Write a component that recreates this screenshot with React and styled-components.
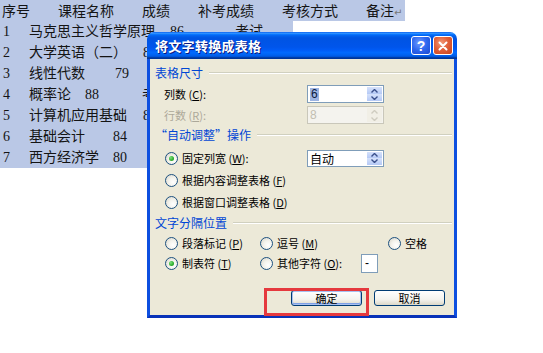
import React from 'react';
import styled, { createGlobalStyle } from 'styled-components';

const Global = createGlobalStyle`
  html, body { margin: 0; padding: 0; background: #fff; }
  body { width: 543px; height: 353px; overflow: hidden; }
  #root { width: 543px; height: 353px; }
`;

const Page = styled.div`
  position: relative;
  width: 543px;
  height: 353px;
  background: #fff;
  overflow: hidden;
`;

/* ---------- document behind the dialog ---------- */
const Doc = styled.div`
  display: flex;
  flex-direction: column;
  align-items: flex-start;
  font-family: "Liberation Serif", "Noto Sans CJK SC", serif;
  font-size: 14px;
  color: #141414;
`;

const DocRow = styled.div`
  display: flex;
  align-items: center;
  box-sizing: border-box;
  height: 21px;
  width: ${p => p.$w}px;
  padding-top: ${p => p.$pt || 0}px;
  background: #bac8e6;
  white-space: nowrap;
  line-height: 18px;
`;

const Cell = styled.span`
  flex: none;
  width: ${p => (p.$w ? `${p.$w}px` : 'auto')};
  padding-left: ${p => p.$pl || 0}px;
  box-sizing: border-box;
`;

const Mark = styled.span`
  font-size: 10px;
  color: #777;
  font-family: "DejaVu Sans", sans-serif;
`;

/* ---------- dialog ---------- */
const Dialog = styled.div`
  position: absolute;
  left: 147px;
  top: 32px;
  width: 310px;
  height: 286px;
  display: flex;
  flex-direction: column;
  font-family: "Noto Sans CJK SC", sans-serif;
`;

const TitleBar = styled.div`
  flex: none;
  height: 27px;
  display: flex;
  align-items: center;
  gap: 2px;
  padding: 0 4px 0 8px;
  border-radius: 7px 7px 0 0;
  background: linear-gradient(to bottom, #0058ee 0%, #3593ff 4%, #288eff 6%, #127dff 8%, #036ffc 10%, #0262ee 14%, #0057e5 20%, #0054e3 24%, #0055eb 56%, #005bf5 66%, #026afe 76%, #0062ef 86%, #0052d6 92%, #0040ab 94%, #003092 100%);
`;

const Title = styled.div`
  flex: 1;
  color: #fff;
  font-weight: bold;
  font-size: 13px;
  line-height: 16px;
  letter-spacing: 0.3px;
  text-shadow: 1px 1px 0 #0a1a80;
`;

const TitleButton = styled.div`
  width: 20px;
  height: 19px;
  box-sizing: border-box;
  border: 1px solid #fff;
  border-radius: 3px;
  display: flex;
  align-items: center;
  justify-content: center;
  color: #fff;
  font-family: "Liberation Sans", sans-serif;
  font-weight: bold;
  font-size: 14px;
  background: ${p => p.$close
    ? 'radial-gradient(circle at 40% 35%, #f29a79 0%, #e1603a 45%, #c8431c 100%)'
    : 'radial-gradient(circle at 40% 35%, #6e9bff 0%, #2d66ee 50%, #1a48d0 100%)'};
`;

const Body = styled.div`
  flex: 1;
  display: flex;
  flex-direction: column;
  background: #ece9d8;
  border: 3px solid #0d4fe0;
  border-top: 0;
  border-bottom-color: #0832b8;
  padding-top: 6px;
  font-size: 11px;
  color: #000;
`;

const GroupHeader = styled.div`
  display: flex;
  align-items: center;
  height: 16px;
  margin-top: ${p => p.$mt || 0}px;
  padding: 0 2px 0 5px;
`;

const GroupLabel = styled.span`
  color: #0046d5;
  font-size: 12px;
  line-height: 16px;
`;

const GroupLine = styled.span`
  flex: 1;
  height: 0;
  margin-left: 6px;
  border-top: 1px solid #d0d0bf;
  border-bottom: 1px solid #fff;
`;

const FieldRow = styled.div`
  display: flex;
  align-items: center;
  height: 20px;
  margin-top: ${p => p.$mt || 0}px;
  padding-left: 14px;
`;

const FieldLabel = styled.span`
  width: 143px;
  flex: none;
  color: ${p => (p.$disabled ? '#aca899' : '#000')};
  line-height: 14px;
`;

const SpinBox = styled.div`
  width: 77px;
  height: ${p => p.$h || 18}px;
  box-sizing: border-box;
  display: flex;
  border: 1px solid ${p => (p.$disabled ? '#c9c7ba' : '#7f9db9')};
  background: ${p => (p.$disabled ? '#f4f3ee' : '#fff')};
`;

const SpinValue = styled.div`
  flex: 1;
  display: flex;
  align-items: center;
  padding-left: 2px;
  font-family: "Liberation Sans", "Noto Sans CJK SC", sans-serif;
  font-size: 12px;
  color: ${p => (p.$disabled ? '#c2beb1' : '#000')};
`;

const Selected = styled.span`
  background: #9db4e3;
  color: #0b1a40;
  padding: 0 1px;
  line-height: 13px;
`;

const SpinButtons = styled.div`
  width: 15px;
  flex: none;
  display: flex;
  flex-direction: column;
  padding: 1px;
  gap: 0;
`;

const SpinHalf = styled.div`
  flex: 1;
  display: flex;
  align-items: center;
  justify-content: center;
  background: ${p => (p.$disabled ? '#f1efe6' : 'linear-gradient(to bottom, #d6e2fb, #b5c9f5)')};
`;

const RadioRow = styled.div`
  display: flex;
  align-items: center;
  height: ${p => p.$h || 22}px;
  margin-top: ${p => p.$mt || 0}px;
  padding-left: 15px;
`;

const RadioItem = styled.div`
  display: flex;
  align-items: center;
  gap: 4px;
  flex: none;
  width: ${p => (p.$w ? `${p.$w}px` : 'auto')};
  line-height: 14px;
  white-space: nowrap;
`;

const RadioCircle = styled.span`
  width: 13px;
  height: 13px;
  box-sizing: border-box;
  flex: none;
  border-radius: 50%;
  border: 1px solid #1c5180;
  background: radial-gradient(circle at 65% 65%, #ffffff 0%, #f3f2ec 45%, #d5d2c5 100%);
  display: flex;
  align-items: center;
  justify-content: center;
  &::after {
    content: '';
    display: ${p => (p.$checked ? 'block' : 'none')};
    width: 5px;
    height: 5px;
    border-radius: 50%;
    background: radial-gradient(circle at 35% 35%, #7fe07f 0%, #31b131 55%, #1a8c1a 100%);
  }
`;

const CharBox = styled.div`
  width: 17px;
  height: 19px;
  box-sizing: border-box;
  border: 1px solid #7f9db9;
  background: #fff;
  display: flex;
  align-items: center;
  padding-left: 3px;
  font-family: "Liberation Sans", sans-serif;
  font-size: 12px;
`;

const ButtonRow = styled.div`
  display: flex;
  justify-content: flex-end;
  gap: 12px;
  margin-top: 17px;
  padding-right: 9px;
`;

const Button = styled.div`
  width: 71px;
  height: 16px;
  box-sizing: border-box;
  border: 1px solid #003c74;
  border-radius: 3px;
  display: flex;
  align-items: center;
  justify-content: center;
  font-size: 11px;
  line-height: 14px;
  background: linear-gradient(to bottom, #ffffff 0%, #f4f3ee 60%, #dcd8c8 100%);
  box-shadow: ${p => (p.$default ? 'inset 0 0 0 1px #a8c0f0, inset 0 -1px 0 1px #7ea0e6' : 'none')};
`;

const Highlight = styled.div`
  position: absolute;
  left: 264px;
  top: 288px;
  width: 105px;
  height: 28px;
  box-sizing: border-box;
  border: 3px solid #e5393e;
  pointer-events: none;
`;

const Arrow = ({ up, color = '#3a4f8a' }) => (
  <svg width="7" height="4" viewBox="0 0 7 4">
    <path d={up ? 'M0.5 3.5 L3.5 0.5 L6.5 3.5' : 'M0.5 0.5 L3.5 3.5 L6.5 0.5'} fill="none" stroke={color} strokeWidth="1.4" />
  </svg>
);

const Spinner = ({ disabled }) => (
  <SpinButtons>
    <SpinHalf $disabled={disabled}><Arrow up color={disabled ? '#cfccc0' : '#3a4f8a'} /></SpinHalf>
    <SpinHalf $disabled={disabled}><Arrow color={disabled ? '#cfccc0' : '#3a4f8a'} /></SpinHalf>
  </SpinButtons>
);

const Radio = ({ checked, w, children }) => (
  <RadioItem $w={w}>
    <RadioCircle $checked={checked} />
    <span>{children}</span>
  </RadioItem>
);

const rows = [
  { n: '1', name: '马克思主义哲学原理', nw: 141, score: '86', sw: 65, rest: '考试', w: 293 },
  { n: '2', name: '大学英语（二）', nw: 114, score: '85', w: 300 },
  { n: '3', name: '线性代数', nw: 86, score: '79', w: 300 },
  { n: '4', name: '概率论', nw: 56, score: '88', sw: 57, rest: '考试', w: 300 },
  { n: '5', name: '计算机应用基础', nw: 114, score: '83', w: 300 },
  { n: '6', name: '基础会计', nw: 84, score: '84', w: 300 },
  { n: '7', name: '西方经济学', nw: 84, score: '80', w: 300 },
];

export default function App() {
  return (
    <Page>
      <Global />
      <Doc>
        <DocRow $w={405} $pt={3}>
          <Cell $w={58} $pl={2}>序号</Cell>
          <Cell $w={84}>课程名称</Cell>
          <Cell $w={56}>成绩</Cell>
          <Cell $w={84}>补考成绩</Cell>
          <Cell $w={84}>考核方式</Cell>
          <Cell>备注<Mark>↵</Mark></Cell>
        </DocRow>
        {rows.map(r => (
          <DocRow key={r.n} $w={r.w}>
            <Cell $w={29} $pl={3}>{r.n}</Cell>
            <Cell $w={r.nw}>{r.name}</Cell>
            <Cell $w={r.sw}>{r.score}</Cell>
            {r.rest && <Cell>{r.rest}</Cell>}
          </DocRow>
        ))}
      </Doc>

      <Dialog>
        <TitleBar>
          <Title>将文字转换成表格</Title>
          <TitleButton>?</TitleButton>
          <TitleButton $close>
            <svg width="10" height="10" viewBox="0 0 10 10">
              <path d="M1.5 1.5 L8.5 8.5 M8.5 1.5 L1.5 8.5" stroke="#fff" strokeWidth="2" strokeLinecap="round" />
            </svg>
          </TitleButton>
        </TitleBar>
        <Body>
          <GroupHeader>
            <GroupLabel>表格尺寸</GroupLabel>
            <GroupLine />
          </GroupHeader>
          <FieldRow $mt={3}>
            <FieldLabel>列数 (<u>C</u>):</FieldLabel>
            <SpinBox>
              <SpinValue><Selected>6</Selected></SpinValue>
              <Spinner />
            </SpinBox>
          </FieldRow>
          <FieldRow $mt={1}>
            <FieldLabel $disabled>行数 (<u>R</u>):</FieldLabel>
            <SpinBox $disabled>
              <SpinValue $disabled>8</SpinValue>
              <Spinner disabled />
            </SpinBox>
          </FieldRow>

          <GroupHeader $mt={2}>
            <GroupLabel>“自动调整”操作</GroupLabel>
            <GroupLine />
          </GroupHeader>
          <RadioRow $mt={4}>
            <Radio checked w={142}>固定列宽 (<u>W</u>):</Radio>
            <SpinBox $h={17}>
              <SpinValue>自动</SpinValue>
              <Spinner />
            </SpinBox>
          </RadioRow>
          <RadioRow>
            <Radio>根据内容调整表格 (<u>F</u>)</Radio>
          </RadioRow>
          <RadioRow>
            <Radio>根据窗口调整表格 (<u>D</u>)</Radio>
          </RadioRow>

          <GroupHeader $mt={2}>
            <GroupLabel>文字分隔位置</GroupLabel>
            <GroupLine />
          </GroupHeader>
          <RadioRow $mt={2} $h={20}>
            <Radio w={95}>段落标记 (<u>P</u>)</Radio>
            <Radio w={128}>逗号 (<u>M</u>)</Radio>
            <Radio>空格</Radio>
          </RadioRow>
          <RadioRow $h={20}>
            <Radio checked w={95}>制表符 (<u>T</u>)</Radio>
            <Radio w={101}>其他字符 (<u>O</u>):</Radio>
            <CharBox>-</CharBox>
          </RadioRow>

          <ButtonRow>
            <Button $default>确定</Button>
            <Button>取消</Button>
          </ButtonRow>
        </Body>
      </Dialog>
      <Highlight />
    </Page>
  );
}
